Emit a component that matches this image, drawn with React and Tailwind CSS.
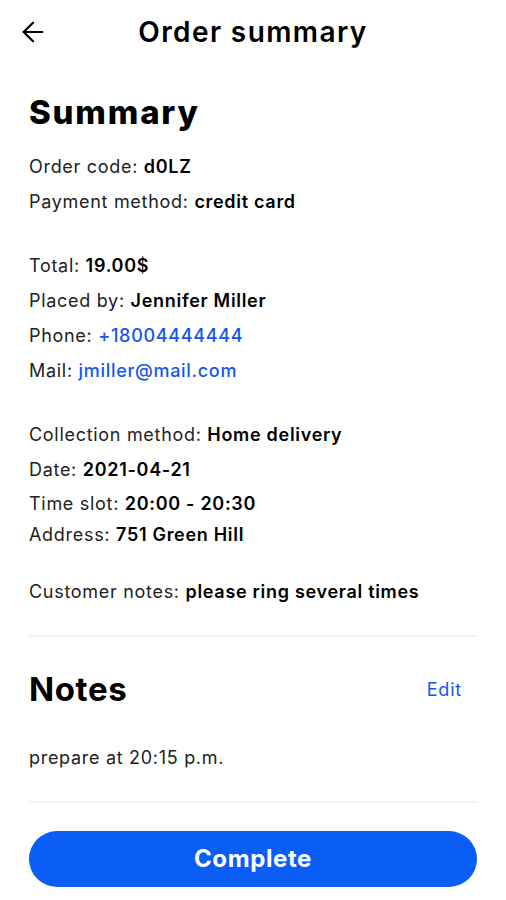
import { ArrowLeft } from "lucide-react";

const Row = ({ label, value, link = false, className = "" }) => {
  return (
    <p className={`h-[35px] flex items-center text-[18px] tracking-[0.7px] text-[#222] ${className}`}>
      <span>{label}:&nbsp;</span>
      <span className={link ? "font-medium text-[#1556f0]" : "font-semibold text-black"}>{value}</span>
    </p>
  );
};

const App = () => {
  return (
    <div className="w-[506px] h-[900px] bg-white font-['Inter',sans-serif] text-black">
      {/* header */}
      <div className="relative h-[64px] flex items-center justify-center">
        <ArrowLeft className="absolute left-[17px] top-[16px] w-[32px] h-[32px]" strokeWidth={1.6} />
        <h1 className="text-[28px] font-semibold tracking-[1.4px]">Order summary</h1>
      </div>

      <div className="px-[29px]">
        <h2 className="mt-[28px] text-[33px] font-extrabold leading-[40px] tracking-[1.8px]">Summary</h2>

        <div className="mt-[17px]">
          <Row label="Order code" value="d0LZ" />
          <Row label="Payment method" value="credit card" />
        </div>

        <div className="mt-[29px]">
          <Row label="Total" value="19.00$" />
          <Row label="Placed by" value="Jennifer Miller" />
          <Row label="Phone" value="+18004444444" link />
          <Row label="Mail" value="jmiller@mail.com" link />
        </div>

        <div className="mt-[29px]">
          <Row label="Collection method" value="Home delivery" />
          <Row label="Date" value="2021-04-21" />
          <Row label="Time slot" value="20:00 - 20:30" className="!h-[33px]" />
          <Row label="Address" value="751 Green Hill" className="!h-[29px]" />
        </div>

        <div className="mt-[25px]">
          <Row label="Customer notes" value="please ring several times" />
        </div>

        <div className="mt-[26px] border-t-2 border-[#f2f2f2]" />

        <div className="mt-[32px] flex items-center justify-between pr-[15px]">
          <h2 className="text-[33px] font-bold leading-[40px] tracking-[0.6px]">Notes</h2>
          <span className="text-[18px] tracking-[0.8px] text-[#1556f0]">Edit</span>
        </div>

        <p className="mt-[35px] text-[18px] tracking-[0.7px] text-[#222]">prepare at 20:15 p.m.</p>

        <div className="mt-[30px] border-t-2 border-[#f2f2f2]" />

        <button className="mt-[28px] w-full h-[56px] rounded-full bg-[#0a5ef6] text-white text-[24px] font-bold tracking-[0.6px]">
          Complete
        </button>
      </div>
    </div>
  );
};

export default App;
